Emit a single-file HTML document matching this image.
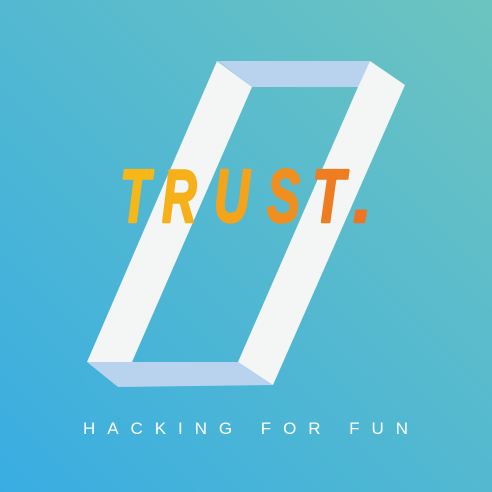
<!DOCTYPE html>
<html><head><meta charset="utf-8"><style>
html,body{margin:0;padding:0;width:492px;height:492px;overflow:hidden}
</style></head><body>
<svg width="492" height="492" viewBox="0 0 492 492" xmlns="http://www.w3.org/2000/svg">
<defs>
<linearGradient id="bg" x1="1" y1="0" x2="0" y2="1">
<stop offset="0" stop-color="#6dc4bf"/>
<stop offset="1" stop-color="#39ade2"/>
</linearGradient>
</defs>
<rect width="492" height="492" fill="url(#bg)"/>
<polygon points="218,61 370,61 358,87 252,87" fill="#b9d2ee"/>
<polygon points="87,362 238,362 273,385 118,387" fill="#b9d2ee"/>
<polygon points="217,61 252,87 132,362 87,362" fill="#f4f5f5"/>
<polygon points="370,61 405,85 273,385 238,362 358,87" fill="#f4f5f5"/>
<g font-family="Liberation Sans, sans-serif" font-weight="bold" font-style="italic" font-size="75" stroke-width="2.5" stroke-linejoin="round">
<text transform="translate(120,222) scale(0.66,1)" fill="#f6b819" stroke="#f6b819">T</text>
<text transform="translate(162,222) scale(0.64,1)" fill="#f5b01a" stroke="#f5b01a">R</text>
<text transform="translate(214,222) scale(0.66,1)" fill="#f3a41b" stroke="#f3a41b">U</text>
<text transform="translate(267,222) scale(0.66,1)" fill="#f08e20" stroke="#f08e20">S</text>
<text transform="translate(312,222) scale(0.72,1)" fill="#ee7d22" stroke="#ee7d22">T</text>
<text transform="translate(353,222) scale(0.9,1)" fill="#ee7424" stroke="#ee7424">.</text>
</g>
<text x="83" y="434" font-family="Liberation Sans, DejaVu Sans, sans-serif" font-size="17" fill="#ffffff" textLength="325" lengthAdjust="spacing">HACKING FOR FUN</text>
</svg>
</body></html>
